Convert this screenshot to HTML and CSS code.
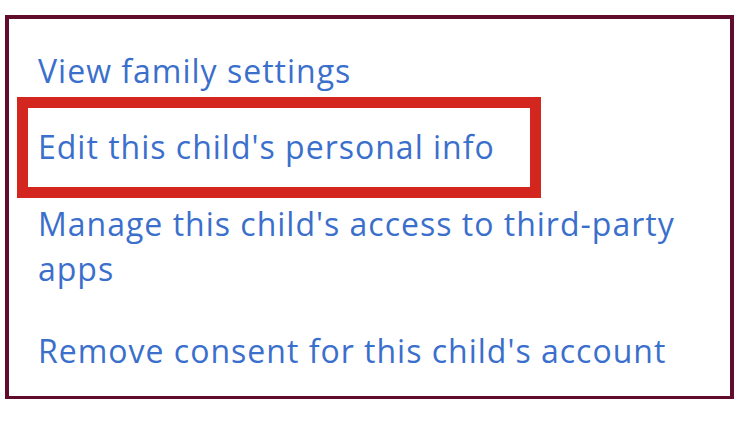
FILE: index.html
```html
<!DOCTYPE html>
<html lang="en">
<head>
    <meta charset="UTF-8">
    <title>Family settings</title>
    <link rel="stylesheet" href="styles.css">
</head>
<body>
    <div class="panel">
        <a class="link-item" href="#">View family settings</a>
        <div class="highlight">
            <a class="link-item" href="#">Edit this child's personal info</a>
        </div>
        <a class="link-item wrap" href="#">Manage this child's access to third-party apps</a>
        <a class="link-item last" href="#">Remove consent for this child's account</a>
    </div>
</body>
</html>
```
FILE: styles.css
```css
body {
    margin: 0;
    background-color: #ffffff;
    font-family: "Open Sans", "Noto Sans", sans-serif;
}
.panel {
    box-sizing: border-box;
    width: 729px;
    height: 384px;
    margin: 15px 0 0 5px;
    border: 4px solid #610b2d;
    border-bottom-width: 3px;
    padding: 29px 0 0 29px;
    display: flex;
    flex-direction: column;
    align-items: flex-start;
}
.link-item {
    display: block;
    color: #3b6fcc;
    text-decoration: none;
    font-size: 32px;
    letter-spacing: 1px;
    line-height: 45px;
}
.highlight {
    margin: 4px 0 3px -21px;
    border: 11px solid #d2261f;
    padding: 16px 0 18px 10px;
    width: 492px;
}
.wrap {
    max-width: 680px;
}
.last {
    margin-top: 37px;
}
```
